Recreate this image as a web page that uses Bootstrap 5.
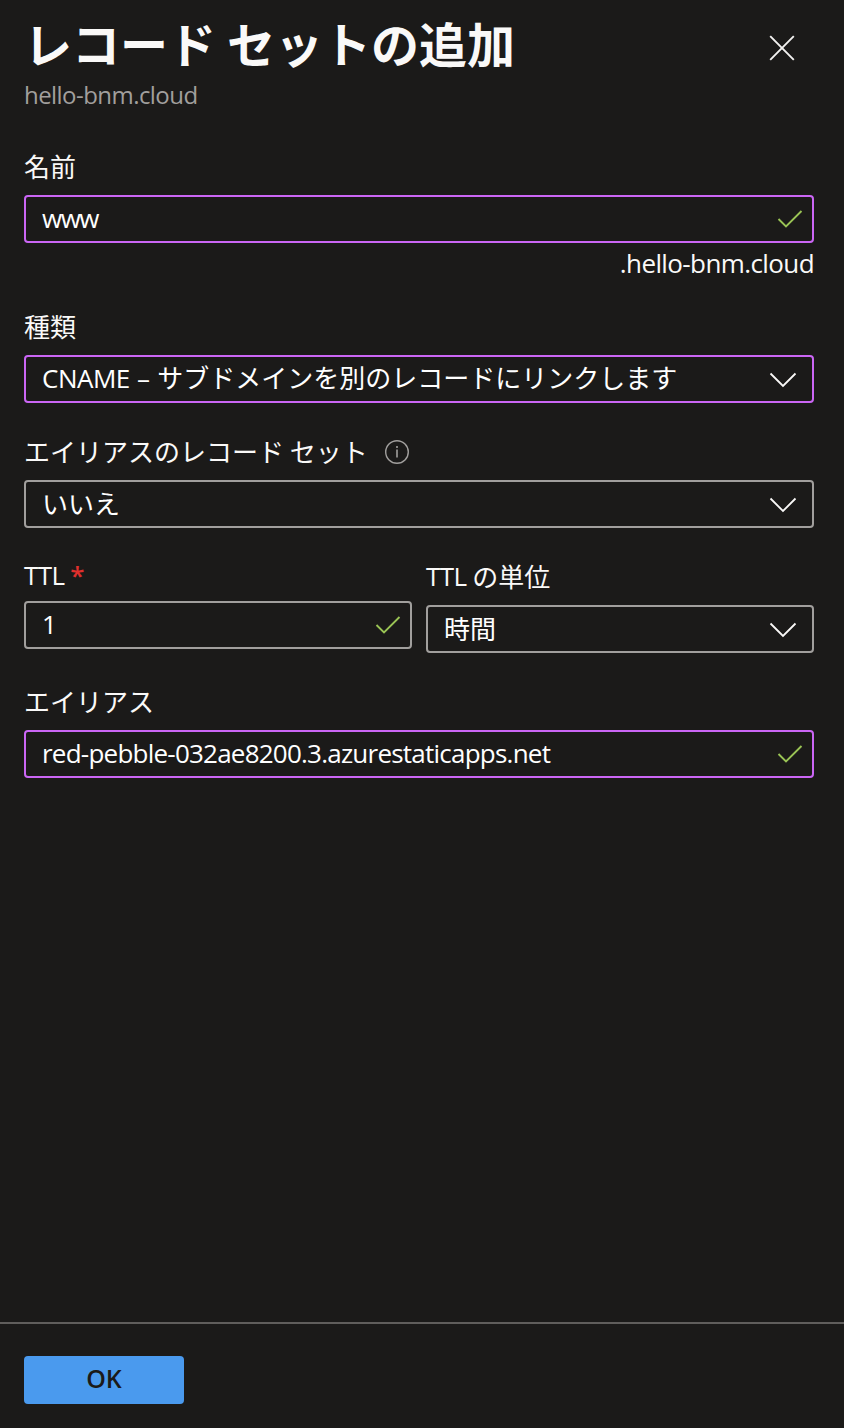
<!DOCTYPE html>
<html lang="ja">
<head>
<meta charset="utf-8">
<meta name="viewport" content="width=device-width, initial-scale=1">
<title>レコード セットの追加</title>
<link href="https://cdn.jsdelivr.net/npm/bootstrap@5.3.0/dist/css/bootstrap.min.css" rel="stylesheet">
<style>
  body { background: #1b1a19; color: #faf9f8; font-family: "Open Sans", "Noto Sans CJK JP", sans-serif; font-size: 26px; line-height: 36px; }
  .blade { min-height: 1428px; }
  .blade-head { padding: 10px 30px 0 24px; height: 146px; }
  .blade-title { font-size: 48px; line-height: 64px; font-weight: 700; font-family: "Noto Sans CJK JP", sans-serif; margin: 0 0 4px; }
  .blade-sub { font-size: 24px; line-height: 34px; color: #a19f9d; letter-spacing: -.55px; }
  .blade-form { padding: 0 30px 0 24px; }
  .jp { font-family: "Noto Sans CJK JP", sans-serif; }
  .lat { font-family: "Open Sans", sans-serif; letter-spacing: -.6px; }
  .lat-tight { letter-spacing: -.77px; }
  .lat-www { letter-spacing: -1.5px; }
  .cname { letter-spacing: -.5px; word-spacing: 1px; margin-right: 2px; }
  .form-label { display: flex; align-items: center; height: 36px; margin: 0 0 13px; white-space: pre; }
  .form-label.jp { padding-top: 4px; }
  .form-label.ttl-label { padding-top: 2px; margin-bottom: 9px; }
  .star { color: #e0302d; font-weight: 600; margin-left: -1px; }
  .field, .field:focus { display: flex; align-items: center; justify-content: space-between; height: 48px; padding: 0 9px 0 16px; border: 2px solid #a19f9d; border-radius: 4px; background: transparent; color: #fff; font-size: 26px; line-height: 36px; white-space: pre; }
  .field > span { padding-bottom: 2px; }
  .field > span.jp { padding-bottom: 3px; }
  .field.edited { border-color: #cb66f5; }
  .field.choice { padding-right: 15px; }
  .field.choice svg { margin-top: 1px; }
  .suffix { height: 63px; padding: 2px 0 0; }
  .gap-below { margin-bottom: 28px; }
  .ttl-row { display: grid; grid-template-columns: 388px 388px; column-gap: 14px; height: 125px; }
  .blade-foot { border-top: 2px solid #605e5c; height: 106px; padding: 32px 24px 0; }
  .ok-btn, .ok-btn:hover { width: 160px; height: 48px; padding: 0 0 4px; border: 0; border-radius: 4px; background: #4a9aee; color: #1b1a19; font-size: 25px; font-weight: 600; line-height: 42px; }
  .close-btn { width: 26px; height: 26px; margin: 25px 19px 0 0; line-height: 0; }
  .info { margin: 1px 0 0 16px; }
  svg { fill: none; flex: none; display: block; }
</style>
</head>
<body>
<svg width="0" height="0" class="d-none">
  <symbol id="tick" viewBox="0 0 26 20"><path d="M1.500 10 9 17.500 24.500 2" stroke="#9ac455" stroke-width="1.900"/></symbol>
  <symbol id="chev" viewBox="0 0 28 16"><path d="M1.500 1.500 14 14 26.500 1.500" stroke="#faf9f8" stroke-width="1.800"/></symbol>
</svg>
<main class="blade d-flex flex-column">
  <header class="blade-head d-flex justify-content-between align-items-start">
    <div>
      <h1 class="blade-title">レコード セットの追加</h1>
      <div class="blade-sub">hello-bnm.cloud</div>
    </div>
    <button class="close-btn btn p-0 border-0" aria-label="閉じる"><svg width="26" height="26"><path d="M1.200 1.200 24.800 24.800M24.800 1.200 1.200 24.800" stroke="#f3f2f1" stroke-width="1.900"/></svg></button>
  </header>
  <form class="blade-form flex-grow-1">
    <div>
      <div class="form-label jp">名前</div>
      <div class="form-control field edited"><span class="lat lat-www">www</span><svg width="26" height="20"><use href="#tick"/></svg></div>
      <div class="suffix text-end"><span class="lat">.hello-bnm.cloud</span></div>
    </div>
    <div class="gap-below">
      <div class="form-label jp">種類</div>
      <div class="form-control field edited choice"><span class="jp"><span class="lat cname">CNAME –</span> サブドメインを別のレコードにリンクします</span><svg width="28" height="16"><use href="#chev"/></svg></div>
    </div>
    <div class="gap-below">
      <div class="form-label jp">エイリアスのレコード セット<svg class="info" width="26" height="26"><circle cx="13" cy="13" r="11.300" stroke="#a19f9d" stroke-width="1.400"/><path d="M13 10.500v8M13 7v2" stroke="#a19f9d" stroke-width="1.600"/></svg></div>
      <div class="form-control field choice"><span class="jp">いいえ</span><svg width="28" height="16"><use href="#chev"/></svg></div>
    </div>
    <div class="ttl-row">
      <div>
        <div class="form-label ttl-label"><span class="lat">TTL</span><span class="star"> *</span></div>
        <div class="form-control field"><span>1</span><svg width="26" height="20"><use href="#tick"/></svg></div>
      </div>
      <div>
        <div class="form-label jp"><span class="lat">TTL</span> の単位</div>
        <div class="form-control field choice"><span class="jp">時間</span><svg width="28" height="16"><use href="#chev"/></svg></div>
      </div>
    </div>
    <div>
      <div class="form-label jp">エイリアス</div>
      <div class="form-control field edited"><span class="lat lat-tight">red-pebble-032ae8200.3.azurestaticapps.net</span><svg width="26" height="20"><use href="#tick"/></svg></div>
    </div>
  </form>
  <footer class="blade-foot"><button class="btn ok-btn">OK</button></footer>
</main>
<script src="https://cdn.jsdelivr.net/npm/bootstrap@5.3.0/dist/js/bootstrap.bundle.min.js"></script>
</body>
</html>
